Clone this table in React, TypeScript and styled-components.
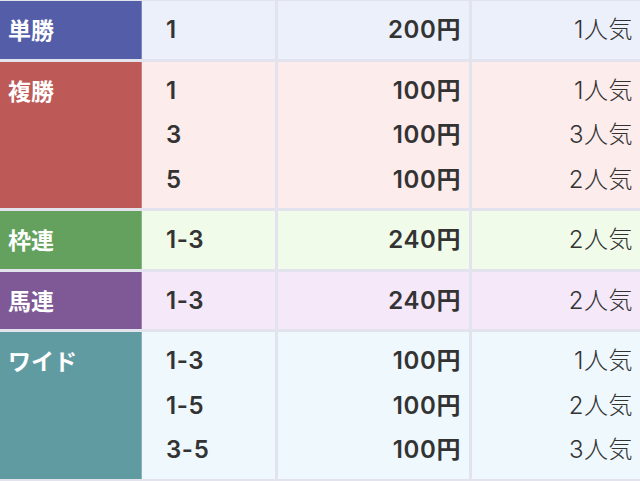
import React from "react";
import styled, { createGlobalStyle } from "styled-components";

const GlobalStyle = createGlobalStyle`
  html, body {
    margin: 0;
    padding: 0;
    background: #e3e3ee;
  }
  body {
    font-family: Inter, "Noto Sans CJK JP", sans-serif;
    color: #333;
  }
`;

type Tone = { label: string; cell: string };

const tones: Record<string, Tone> = {
  blue: { label: "#545ea8", cell: "#ebf0fb" },
  red: { label: "#bd5957", cell: "#fcecec" },
  green: { label: "#64a15e", cell: "#f0fbea" },
  purple: { label: "#7e5996", cell: "#f5e8f9" },
  teal: { label: "#619ba2", cell: "#eef8fd" },
};

const Table = styled.div`
  width: 640px;
  height: 481px;
  padding-top: 1px;
  box-sizing: border-box;
  display: flex;
  flex-direction: column;
  gap: 3px;
  overflow: hidden;
`;

const Row = styled.div`
  display: flex;
`;

const Label = styled.div<{ $bg: string }>`
  width: 142px;
  flex-shrink: 0;
  box-sizing: border-box;
  background: ${(p) => p.$bg};
  border-right: 1px solid rgba(255, 255, 255, 0.25);
  color: #fff;
  font-family: "Noto Sans CJK JP", sans-serif;
  font-weight: 700;
  font-size: 23px;
  line-height: 30px;
  padding: 13px 0 0 8px;
`;

const Data = styled.div`
  flex: 1;
  display: grid;
  grid-template-columns: 133px 191px 1fr;
  column-gap: 3px;
`;

const Cell = styled.div<{ $bg: string; $align?: "left" | "right" }>`
  background: ${(p) => p.$bg};
  display: flex;
  flex-direction: column;
  gap: 14.5px;
  padding: 14px 0 13.5px;
  text-align: ${(p) => p.$align || "left"};
`;

const Line = styled.div<{ $kind: "combo" | "pay" | "pop" }>`
  height: 30px;
  line-height: 30px;
  font-size: 24px;
  font-weight: ${(p) => (p.$kind === "pop" ? 300 : 600)};
  letter-spacing: ${(p) => (p.$kind === "pop" ? "0.5px" : "0.6px")};
  padding: ${(p) =>
    p.$kind === "combo" ? "0 0 0 24px" : p.$kind === "pay" ? "0 8px 0 0" : "0 7px 0 0"};
  color: #333;
`;

type Result = { combo: string; pay: string; pop: string };

const data: { name: string; tone: Tone; results: Result[] }[] = [
  { name: "単勝", tone: tones.blue, results: [{ combo: "1", pay: "200円", pop: "1人気" }] },
  {
    name: "複勝",
    tone: tones.red,
    results: [
      { combo: "1", pay: "100円", pop: "1人気" },
      { combo: "3", pay: "100円", pop: "3人気" },
      { combo: "5", pay: "100円", pop: "2人気" },
    ],
  },
  { name: "枠連", tone: tones.green, results: [{ combo: "1-3", pay: "240円", pop: "2人気" }] },
  { name: "馬連", tone: tones.purple, results: [{ combo: "1-3", pay: "240円", pop: "2人気" }] },
  {
    name: "ワイド",
    tone: tones.teal,
    results: [
      { combo: "1-3", pay: "100円", pop: "1人気" },
      { combo: "1-5", pay: "100円", pop: "2人気" },
      { combo: "3-5", pay: "100円", pop: "3人気" },
    ],
  },
];

export default function App() {
  return (
    <>
      <GlobalStyle />
      <Table>
        {data.map((bet) => (
          <Row key={bet.name}>
            <Label $bg={bet.tone.label}>{bet.name}</Label>
            <Data>
              <Cell $bg={bet.tone.cell}>
                {bet.results.map((r, i) => (
                  <Line key={i} $kind="combo">
                    {r.combo}
                  </Line>
                ))}
              </Cell>
              <Cell $bg={bet.tone.cell} $align="right">
                {bet.results.map((r, i) => (
                  <Line key={i} $kind="pay">
                    {r.pay}
                  </Line>
                ))}
              </Cell>
              <Cell $bg={bet.tone.cell} $align="right">
                {bet.results.map((r, i) => (
                  <Line key={i} $kind="pop">
                    {r.pop}
                  </Line>
                ))}
              </Cell>
            </Data>
          </Row>
        ))}
      </Table>
    </>
  );
}
